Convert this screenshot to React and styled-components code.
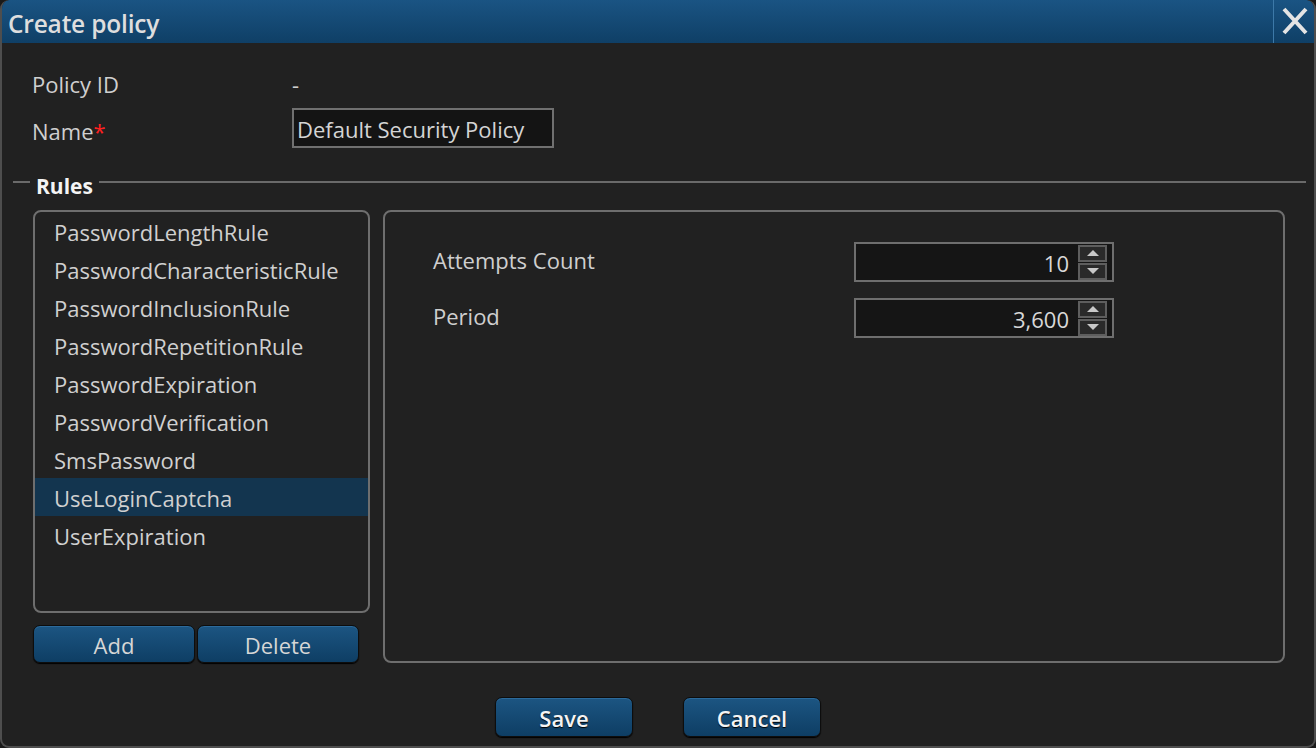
import React from "react";
import styled, { createGlobalStyle } from "styled-components";

const Global = createGlobalStyle`
  html, body { margin: 0; padding: 0; background: #1a1a1a; }
  body { font-family: "Open Sans", "Noto Sans", sans-serif; }
  * { box-sizing: border-box; }
`;

const Window = styled.div`
  width: 1316px;
  height: 748px;
  background: #212121;
  border: 2px solid #4e4e4e;
  border-top: none;
  border-radius: 9px;
  overflow: hidden;
  display: flex;
  flex-direction: column;
  color: #d2d2d2;
  font-size: 22px;
`;

const TitleBar = styled.div`
  height: 43px;
  margin: 0 -2px;
  background: linear-gradient(#1a5483, #0f3f66);
  display: flex;
  align-items: center;
  border-radius: 9px 9px 0 0;
`;

const Title = styled.div`
  flex: 1;
  padding-left: 8px;
  padding-top: 4px;
  font-size: 24.5px;
  font-weight: 600;
  color: #dedede;
  letter-spacing: -0.2px;
`;

const CloseButton = styled.div`
  width: 43px;
  height: 43px;
  border-left: 1px solid #3d79a8;
  display: flex;
  align-items: center;
  justify-content: center;
  padding-bottom: 2px;
`;

const Body = styled.div`
  flex: 1;
  display: flex;
  flex-direction: column;
`;

const Form = styled.div`
  margin-top: 23px;
  padding-left: 30px;
  display: grid;
  grid-template-columns: 260px auto;
  grid-template-rows: 36px 40px;
  row-gap: 6px;
  align-items: center;
`;

const Label = styled.div`
  color: #cfcfcf;
  padding-top: ${(p) => (p.$low ? "5px" : "0")};
`;

const Required = styled.span`
  color: #ff2020;
`;

const TextInput = styled.div`
  width: 262px;
  height: 40px;
  border: 2px solid #707070;
  background: #141414;
  display: flex;
  align-items: center;
  padding-left: 3px;
  padding-top: 2px;
  color: #d4d4d4;
`;

const Fieldset = styled.div`
  margin: 23px 8px 0 11px;
  display: flex;
  flex-direction: column;
`;

const Legend = styled.div`
  height: 27px;
  display: flex;
  align-items: center;
  gap: 6px;
`;

const LegendLine = styled.div`
  height: 2px;
  background: #6a6a6a;
  width: ${(p) => (p.$grow ? "auto" : "17px")};
  flex: ${(p) => (p.$grow ? 1 : "none")};
  margin-top: -5px;
`;

const LegendText = styled.div`
  font-weight: 700;
  color: #f4f4f4;
  font-size: 21px;
  padding-top: 2px;
`;

const RulesRow = styled.div`
  margin-top: 12px;
  padding-left: 20px;
  display: flex;
  gap: 13px;
`;

const LeftCol = styled.div`
  width: 337px;
  display: flex;
  flex-direction: column;
  gap: 12px;
`;

const List = styled.div`
  height: 403px;
  border: 2px solid #6e6e6e;
  border-radius: 8px;
  overflow: hidden;
`;

const ListItem = styled.div`
  height: 38px;
  display: flex;
  align-items: center;
  padding-left: 19px;
  padding-top: 2px;
  background: ${(p) => (p.$selected ? "#13354f" : "transparent")};
  color: #d0d0d0;
`;

const ButtonRow = styled.div`
  display: flex;
  gap: 2px;
`;

const Button = styled.div`
  width: ${(p) => p.$w}px;
  height: ${(p) => p.$h}px;
  border: 1px solid #0d0d0d;
  border-radius: 7px;
  background: linear-gradient(#1c5582, #0e3e64);
  box-shadow: inset 0 1px 0 #2c6a9b, 0 1px 1px #000;
  display: flex;
  align-items: center;
  justify-content: center;
  color: ${(p) => (p.$bright ? "#f4f4f4" : "#d6d6d6")};
  font-weight: ${(p) => (p.$bright ? 600 : 400)};
  font-size: 22px;
  padding-top: 1px;
  text-shadow: ${(p) => (p.$bright ? "0 1px 1px #000" : "none")};
`;

const Panel = styled.div`
  width: 902px;
  height: 453px;
  border: 2px solid #6e6e6e;
  border-radius: 8px;
  padding: 30px 0 0 48px;
  display: flex;
  flex-direction: column;
  gap: 16px;
`;

const FieldRow = styled.div`
  display: flex;
  align-items: center;
  height: 40px;
`;

const FieldLabel = styled.div`
  width: 421px;
  color: #cfcfcf;
  margin-top: -4px;
`;

const SpinBox = styled.div`
  width: 260px;
  height: 40px;
  border: 2px solid #6e6e6e;
  background: #151515;
  display: flex;
  align-items: center;
  justify-content: flex-end;
  padding-right: 5px;
  gap: 9px;
`;

const SpinValue = styled.div`
  color: #d8d8d8;
  padding-top: 2px;
`;

const Spinner = styled.div`
  width: 29px;
  height: 35px;
  display: flex;
  flex-direction: column;
  gap: 1px;
`;

const SpinHalf = styled.div`
  flex: 1;
  border: 2px solid #5e5e5e;
  background: #2a2a2a;
  display: flex;
  align-items: center;
  justify-content: center;
`;

const Arrow = styled.div`
  width: 0;
  height: 0;
  border-left: 6px solid transparent;
  border-right: 6px solid transparent;
  ${(p) =>
    p.$up
      ? "border-bottom: 6px solid #c8c8c8;"
      : "border-top: 6px solid #c8c8c8;"}
`;

const Footer = styled.div`
  margin-top: 34px;
  display: flex;
  justify-content: center;
  gap: 50px;
`;

const rules = [
  "PasswordLengthRule",
  "PasswordCharacteristicRule",
  "PasswordInclusionRule",
  "PasswordRepetitionRule",
  "PasswordExpiration",
  "PasswordVerification",
  "SmsPassword",
  "UseLoginCaptcha",
  "UserExpiration",
];

function Spin({ value }) {
  return (
    <SpinBox>
      <SpinValue>{value}</SpinValue>
      <Spinner>
        <SpinHalf>
          <Arrow $up />
        </SpinHalf>
        <SpinHalf>
          <Arrow />
        </SpinHalf>
      </Spinner>
    </SpinBox>
  );
}

export default function App() {
  return (
    <>
      <Global />
      <Window>
        <TitleBar>
          <Title>Create policy</Title>
          <CloseButton>
            <svg width="26" height="30" viewBox="0 0 26 30">
              <path
                d="M2 3 L24 27 M24 3 L2 27"
                stroke="#e4e4e4"
                strokeWidth="4"
                strokeLinecap="butt"
                fill="none"
              />
            </svg>
          </CloseButton>
        </TitleBar>
        <Body>
          <Form>
            <Label>Policy ID</Label>
            <Label>-</Label>
            <Label $low>
              Name<Required>*</Required>
            </Label>
            <TextInput>Default Security Policy</TextInput>
          </Form>
          <Fieldset>
            <Legend>
              <LegendLine />
              <LegendText>Rules</LegendText>
              <LegendLine $grow />
            </Legend>
            <RulesRow>
              <LeftCol>
                <List>
                  {rules.map((r) => (
                    <ListItem key={r} $selected={r === "UseLoginCaptcha"}>
                      {r}
                    </ListItem>
                  ))}
                </List>
                <ButtonRow>
                  <Button $w={162} $h={38}>Add</Button>
                  <Button $w={162} $h={38}>Delete</Button>
                </ButtonRow>
              </LeftCol>
              <Panel>
                <FieldRow>
                  <FieldLabel>Attempts Count</FieldLabel>
                  <Spin value="10" />
                </FieldRow>
                <FieldRow>
                  <FieldLabel>Period</FieldLabel>
                  <Spin value="3,600" />
                </FieldRow>
              </Panel>
            </RulesRow>
          </Fieldset>
          <Footer>
            <Button $w={138} $h={40} $bright>Save</Button>
            <Button $w={138} $h={40} $bright>Cancel</Button>
          </Footer>
        </Body>
      </Window>
    </>
  );
}
